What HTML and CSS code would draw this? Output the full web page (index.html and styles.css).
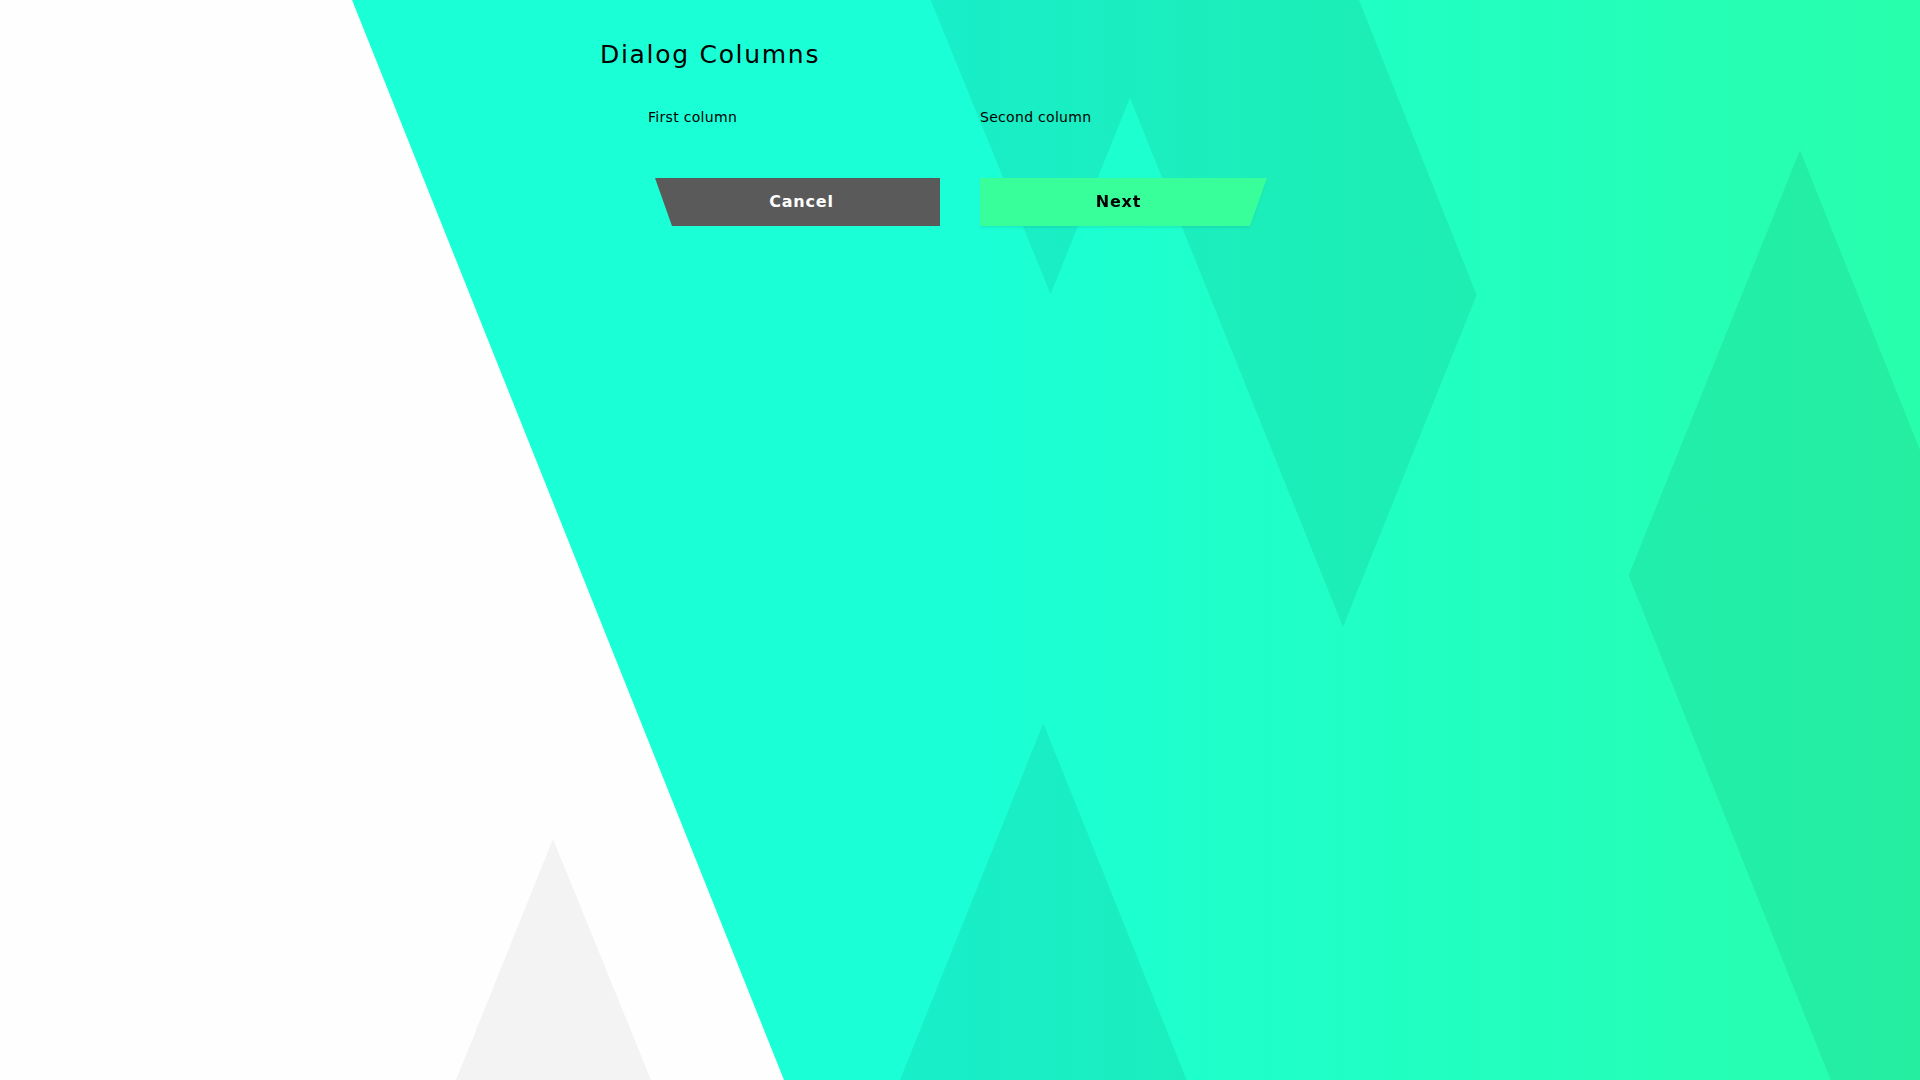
FILE: index.html
```html
<!DOCTYPE html>
<html lang="en">
<head>
<meta charset="utf-8">
<title>Dialog Columns</title>
<link rel="stylesheet" href="styles.css">
</head>
<body>
<svg class="backdrop" viewBox="0 0 1920 1080" width="1920" height="1080" aria-hidden="true">
  <defs>
    <linearGradient id="tealGrad" gradientUnits="userSpaceOnUse" x1="0" y1="0" x2="1920" y2="0">
      <stop offset="0.5" stop-color="#1affd6"/>
      <stop offset="1" stop-color="#28ffac"/>
    </linearGradient>
  </defs>
  <rect x="0" y="0" width="1920" height="1080" fill="#fefefe"/>
  <polygon points="553,839 456,1080 651,1080" fill="#f3f3f3"/>
  <polygon points="352,0 1920,0 1920,1080 784,1080" fill="url(#tealGrad)"/>
  <g fill="#000" fill-opacity="0.065">
    <polygon points="930.6,0 1359,0 1476.7,295 1343,627 1130,98 1050.6,294"/>
    <polygon points="1043.3,723.3 900,1080 1186.7,1080"/>
    <polygon points="1800,150 1920,450 1920,1080 1830.6,1080 1628.6,575.5"/>
  </g>
</svg>

<main class="dialog">
  <h1 class="dialog-title">Dialog Columns</h1>
  <div class="columns">
    <div class="column">
      <p class="column-label">First column</p>
    </div>
    <div class="column">
      <p class="column-label">Second column</p>
    </div>
  </div>
  <div class="actions">
    <div class="action action-left">
      <button class="btn btn-cancel" type="button">Cancel</button>
    </div>
    <div class="action action-right">
      <button class="btn btn-next" type="button">Next</button>
    </div>
  </div>
</main>
</body>
</html>
```

FILE: styles.css
```css
html, body {
  margin: 0;
  padding: 0;
  width: 1920px;
  height: 1080px;
  overflow: hidden;
  background: #fefefe;
  font-family: "DejaVu Sans", "Liberation Sans", sans-serif;
  color: #000;
}

.backdrop {
  position: absolute;
  left: 0;
  top: 0;
  display: block;
  z-index: 0;
}

.dialog {
  position: relative;
  z-index: 1;
  width: 720px;
  margin: 0 auto;
  padding-top: 40px;
  box-sizing: border-box;
}

.dialog-title {
  margin: 0;
  font-size: 25px;
  line-height: 29px;
  font-weight: 400;
  letter-spacing: 1.7px;
}

.columns {
  display: grid;
  grid-template-columns: 292px 292px;
  column-gap: 40px;
  padding: 38px 48px 0;
}

.column-label {
  margin: 0;
  font-size: 14px;
  line-height: 20px;
  letter-spacing: 0.3px;
}

.actions {
  display: grid;
  grid-template-columns: 292px 292px;
  column-gap: 40px;
  padding: 51px 48px 0;
}

.action {
  display: flex;
}

.action-left {
  justify-content: flex-end;
}

.action-right {
  justify-content: flex-start;
  filter: drop-shadow(0 2px 1px rgba(0, 0, 0, 0.06));
}

.btn {
  border: 0;
  margin: 0;
  height: 48px;
  font-family: "DejaVu Sans", "Liberation Sans", sans-serif;
  font-size: 16px;
  font-weight: 700;
  letter-spacing: 0.8px;
  line-height: 48px;
  cursor: pointer;
}

.btn-cancel {
  width: 285px;
  padding: 0 0 0 8px;
  background: #5a5a5a;
  color: #fff;
  clip-path: polygon(0 0, 100% 0, 100% 100%, 17px 100%);
}

.btn-next {
  width: 287px;
  padding: 0 10px 0 0;
  background: #38ff9a;
  color: #000;
  clip-path: polygon(0 0, 100% 0, calc(100% - 17px) 100%, 0 100%);
}
```
